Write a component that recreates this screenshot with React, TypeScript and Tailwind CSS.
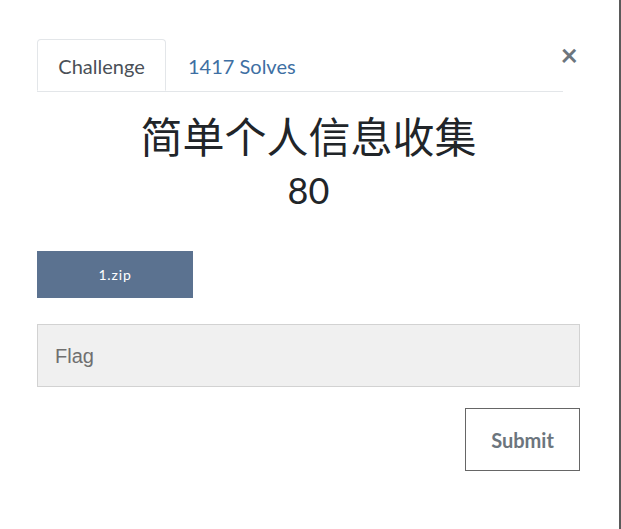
import React from 'react';

export default function App() {
  return (
    <div className="relative w-[621px] h-[529px] bg-white overflow-hidden border-r-2 border-[#5a5a5a] font-['Lato','Noto_Sans_CJK_SC',sans-serif]">
      <div className="pt-[39px] pl-[37px] pr-[39px]">
        {/* Tab bar */}
        <div className="flex items-end">
          <div className="flex flex-1 border-b border-[#e3e6e9] mr-[17px]">
            <div className="h-[52px] w-[129px] -mb-px flex items-center justify-center pt-[2px] border border-b-white border-[#e3e6e9] rounded-t-[4px] bg-white text-[20px] text-[#4a5057]">
              Challenge
            </div>
            <div className="h-[52px] flex items-center pt-[2px] pl-[22px] text-[20px] text-[#3e6fa3]">
              1417 Solves
            </div>
          </div>
        </div>
        <button className="absolute top-[39px] right-[41px] text-[30px] leading-none font-bold text-[#6c757d]">×</button>

        {/* Title */}
        <h1 className="mt-[20px] text-center text-[42px] leading-[50px] text-[#212529]">简单个人信息收集</h1>
        <h2 className="mt-[6px] text-center text-[36px] leading-[44px] text-[#212529]">80</h2>

        {/* Files */}
        <div className="mt-[39px]">
          <div className="w-[156px] h-[47px] flex items-center justify-center bg-[#5b7290] text-white text-[14px] tracking-[0.06em]">
            1.zip
          </div>
        </div>

        {/* Flag input */}
        <div className="mt-[26px] h-[63px] flex items-center border border-[#d2d2d2] bg-[#f0f0f0] pl-[17px] text-[20px] text-[#6f6f6f] font-['Liberation_Sans',sans-serif]">
          Flag
        </div>

        <div className="mt-[21px] flex justify-end">
          <div className="w-[115px] h-[63px] flex items-center justify-center border border-[#666] text-[20px] font-bold text-[#6c757d]">
            Submit
          </div>
        </div>
      </div>
    </div>
  );
}
